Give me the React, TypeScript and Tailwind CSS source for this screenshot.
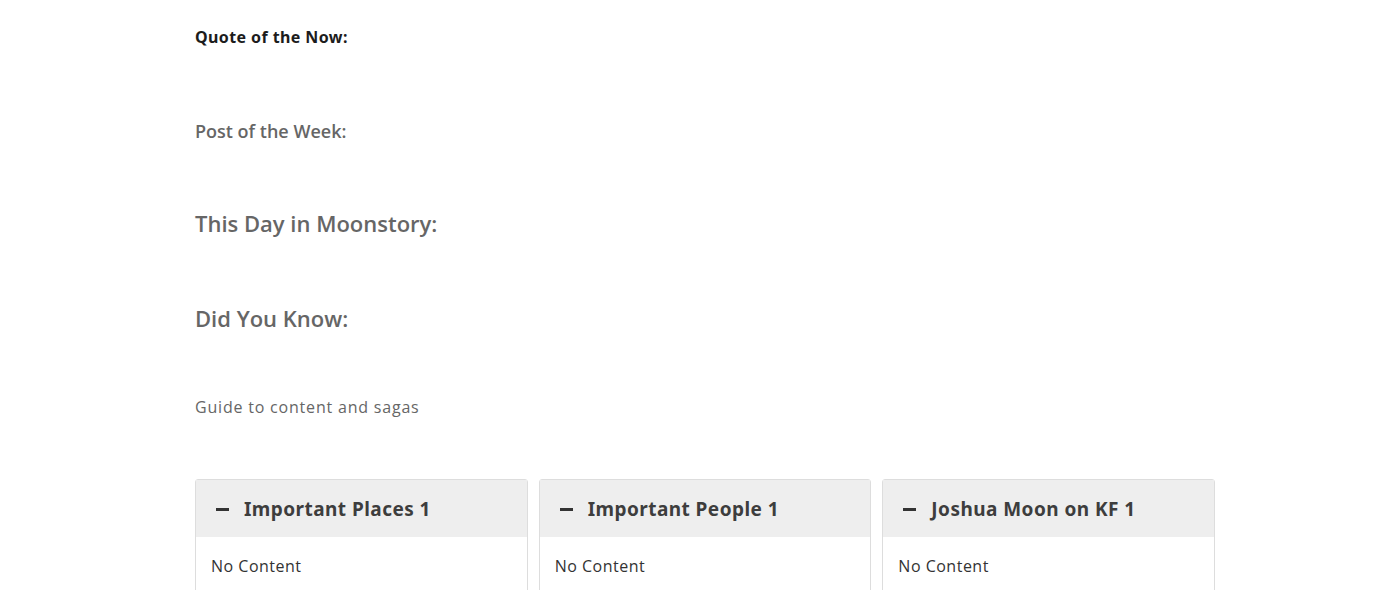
const panels = ["Important Places 1", "Important People 1", "Joshua Moon on KF 1"];

function Panel({ title }: { title: string }) {
  return (
    <div className="rounded-[3px] border border-[#dddddd] bg-white">
      <div className="flex h-[57px] items-center bg-[#eeeeee] pl-[20px] pt-[1px]">
        <span className="mr-[15px] block h-[3px] w-[13px] bg-[#333333]" />
        <span
          className="text-[19px] font-bold tracking-[0.45px] text-[#3d3d3d]"
          style={{ fontFamily: "'Noto Sans', sans-serif" }}
        >
          {title}
        </span>
      </div>
      <div className="h-[80px] px-[15px] pt-[18px] text-[16px] leading-[22px] tracking-[0.5px] text-[#333333]">
        No Content
      </div>
    </div>
  );
}

export default function App() {
  return (
    <div
      className="h-[590px] overflow-hidden bg-white"
      style={{ fontFamily: "'Open Sans', sans-serif" }}
    >
      <div className="ml-[195px] w-[1020px] pt-[25px]">
        <h4
          className="text-[16px] font-bold leading-[24px] tracking-[0.4px] text-[#1c1c1c]"
          style={{ fontFamily: "'Noto Sans', sans-serif" }}
        >
          Quote of the Now:
        </h4>
        <h4 className="mt-[70px] text-[18px] font-semibold leading-[24px] text-[#666666]">
          Post of the Week:
        </h4>
        <h3 className="mt-[65px] text-[22px] font-semibold leading-[30px] text-[#666666]">
          This Day in Moonstory:
        </h3>
        <h3 className="mt-[65px] text-[22px] font-semibold leading-[30px] text-[#666666]">
          Did You Know:
        </h3>
        <p className="mt-[63px] text-[16px] leading-[22px] tracking-[0.8px] text-[#666666]">
          Guide to content and sagas
        </p>
        <div className="mt-[61px] grid grid-cols-3 gap-[11px]">
          {panels.map((p) => (
            <Panel key={p} title={p} />
          ))}
        </div>
      </div>
    </div>
  );
}
